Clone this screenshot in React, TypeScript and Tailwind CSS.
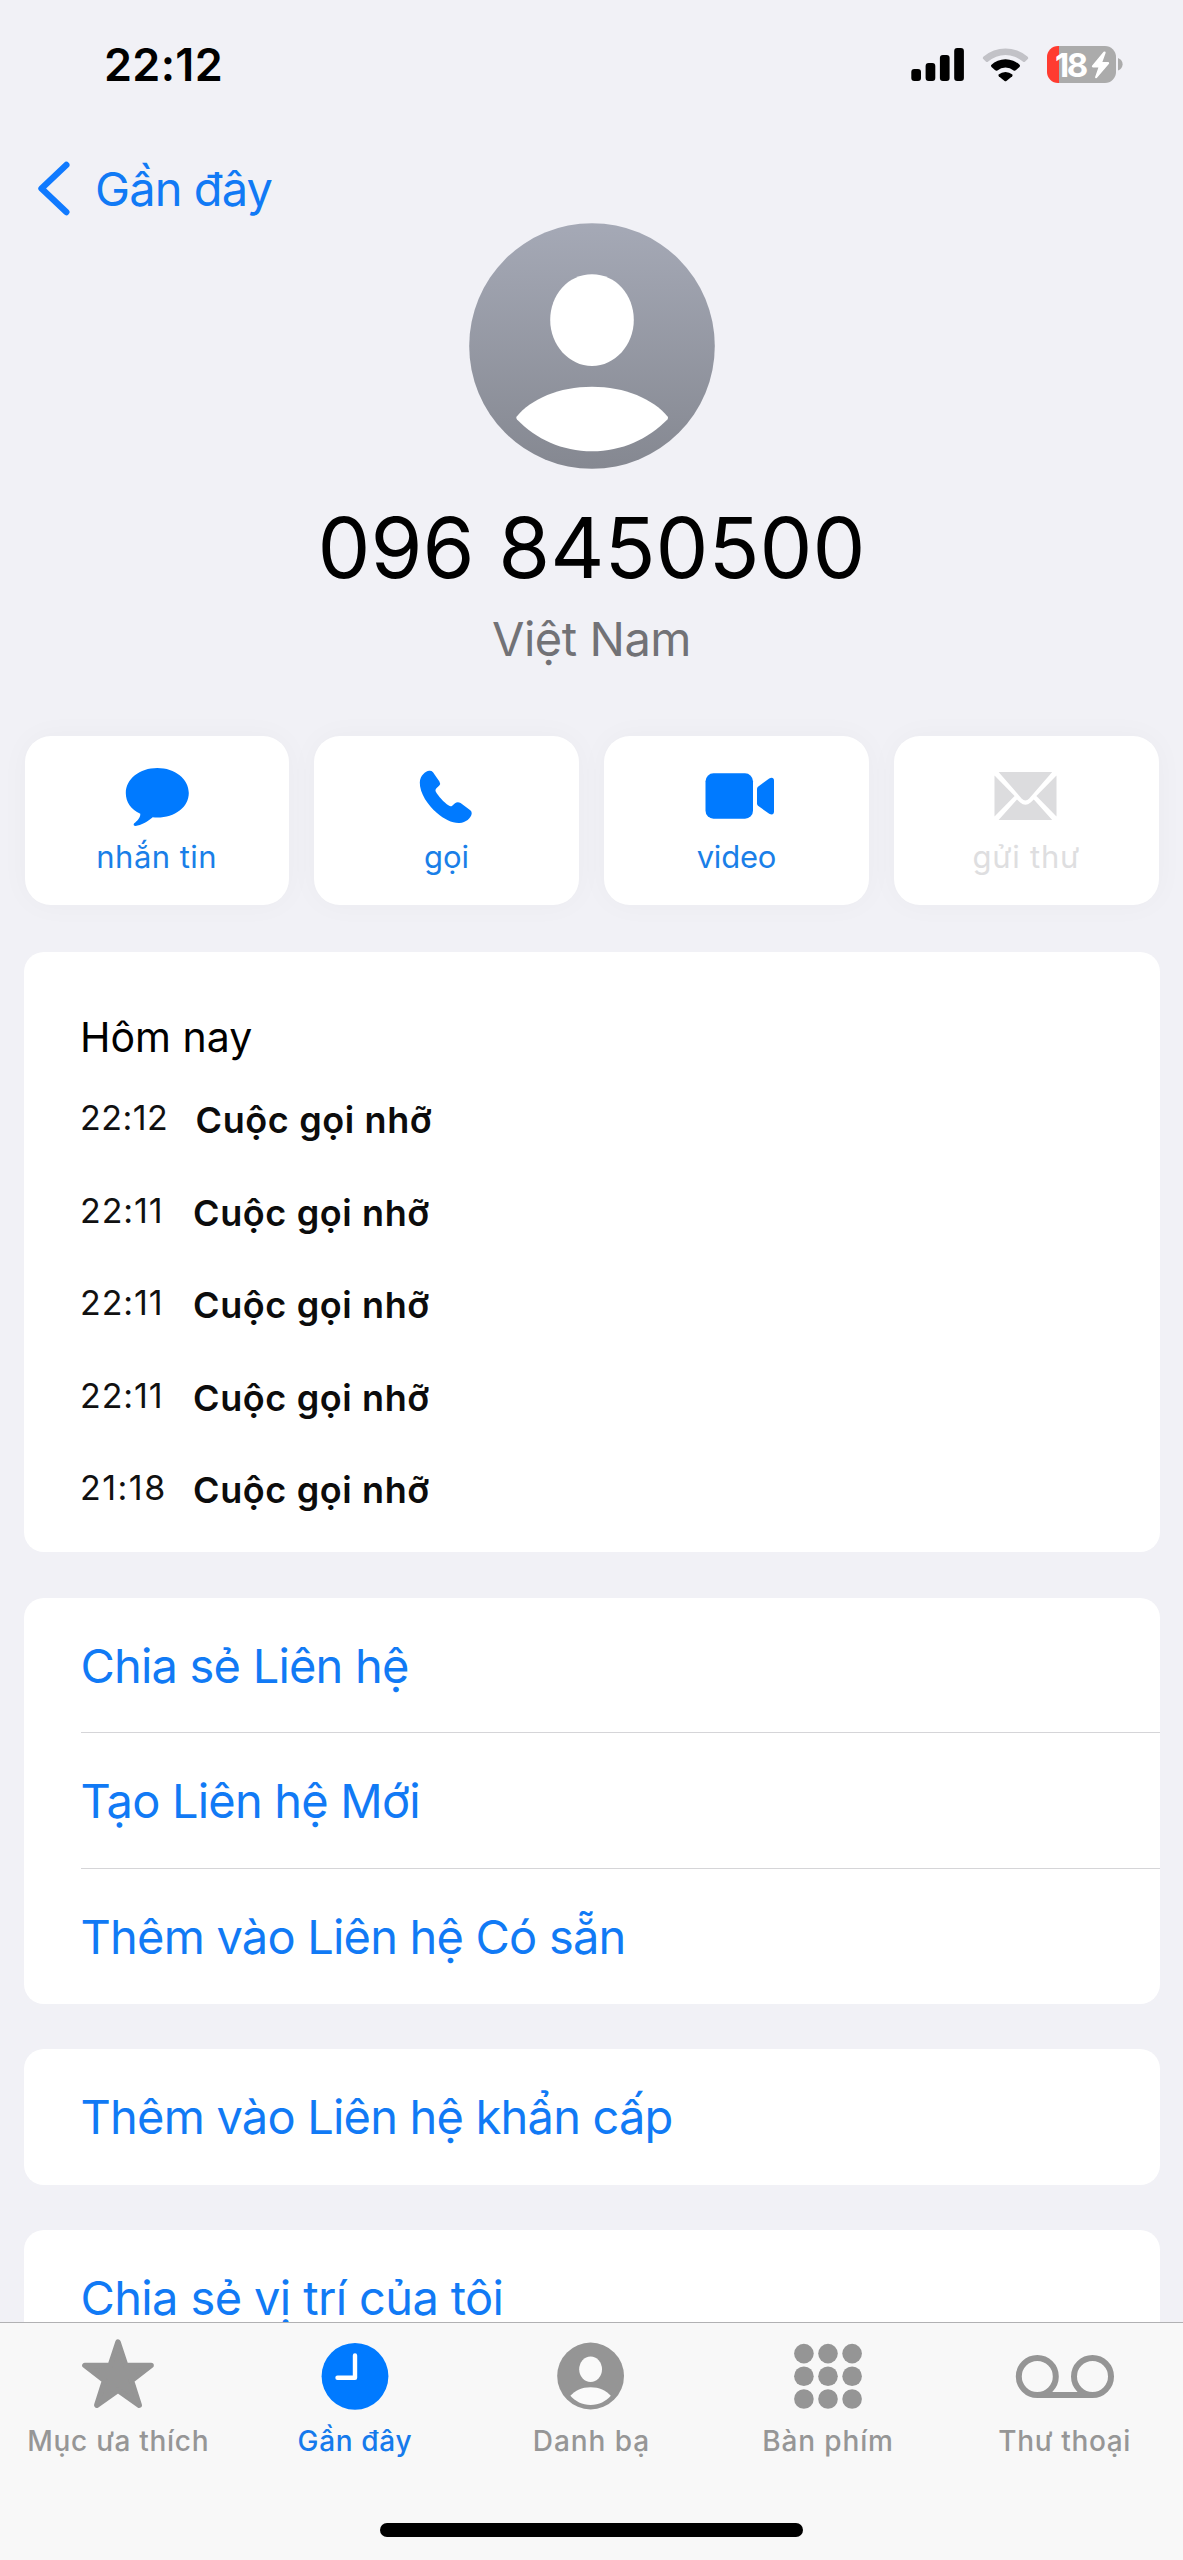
import type { ReactNode } from 'react';

function StatusBar() {
  return (
    <div className="flex h-[160px] shrink-0 items-start justify-between pr-[60px] pl-[104px]">
      <div className="mt-[37px] text-[45px] leading-[55px] font-semibold tracking-[0.3px]">22:12</div>
      <div className="mt-[46px] flex items-start">
        <svg width="54" height="36" viewBox="0 0 54 36">
          <rect x="0.3" y="23" width="9.7" height="12" rx="3" />
          <rect x="14.6" y="17" width="9.7" height="18" rx="3" />
          <rect x="28.9" y="9" width="9.7" height="26" rx="3" />
          <rect x="43.2" y="2" width="9.7" height="33" rx="3" />
        </svg>
        <svg className="ml-[17px]" width="48" height="36" viewBox="0 0 48 36">
          <path d="M1 12.8 Q0.4 11.6 1.6 10.6 A33.5 33.5 0 0 1 45.4 10.6 Q46.6 11.6 46 12.8 L43.2 15.6 Q42 16.6 40.8 15.6 A26 26 0 0 0 6.2 15.6 Q5 16.6 3.8 15.6 Z" fill="#c2c2c7" />
          <path d="M9.2 19 A20.5 20.5 0 0 1 37.8 19 Q38.3 20 37.5 21 L33.8 24.3 Q32.6 25.2 31.6 24.4 A12.6 12.6 0 0 0 15.4 24.4 Q14.4 25.2 13.2 24.3 L9.5 21 Q8.7 20 9.2 19 Z" />
          <path d="M16.6 28.6 A10.5 10.5 0 0 1 30.4 28.6 Q30.9 29.4 30.2 30.2 L24.4 35 Q23.5 35.6 22.6 35 L16.8 30.2 Q16.1 29.4 16.6 28.6 Z" />
        </svg>
        <div className="ml-[17px] flex items-center">
          <div className="flex h-[37px] w-[68.5px] items-center overflow-hidden rounded-[11px] bg-[linear-gradient(90deg,#ff3b30_12px,#ababab_12px)] pl-[8px] text-white">
            <span className="w-[36px] text-[33px] leading-[36px] font-bold tracking-[-2.4px]">18</span>
            <svg className="shrink-0" width="19" height="28" viewBox="0 0 19 28">
              <path d="M12.6 0.8 L1.2 14.4 Q0.2 16.2 2 16.4 L7.4 16.4 L4.1 26 Q4 28 5.8 27 L17.8 13 Q18.8 11.2 17 11 L11.4 11 L14.7 1.8 Q14.6 -0.4 12.6 0.8 Z" fill="#fff" />
            </svg>
          </div>
          <svg className="ml-[2.5px]" width="5" height="13" viewBox="0 0 5 13">
            <path d="M0 0 Q4.6 2 4.6 6.3 Q4.6 10.6 0 12.6 Z" fill="#ababab" />
          </svg>
        </div>
      </div>
    </div>
  );
}

function NavBar() {
  return (
    <div className="flex h-[57px] shrink-0 items-start pl-[37px] text-[#117af5]">
      <svg className="mt-[1px]" width="34" height="56" viewBox="0 0 34 56">
        <path d="M29.3 4 L4.5 27.5 L29.3 51" fill="none" stroke="#107aff" strokeWidth="6.4" strokeLinecap="round" strokeLinejoin="round" />
      </svg>
      <div className="ml-[24px] text-[47px] leading-[57px] tracking-[-0.9px]">Gần đây</div>
    </div>
  );
}

function Profile() {
  return (
    <div className="mt-[6px] flex shrink-0 flex-col items-center">
      <svg width="246" height="246" viewBox="0 0 246 246">
        <defs>
          <linearGradient id="avatar" x1="0" y1="0" x2="0" y2="1">
            <stop offset="0" stopColor="#a5a9b6" />
            <stop offset="1" stopColor="#858891" />
          </linearGradient>
        </defs>
        <circle cx="123" cy="123" r="122.8" fill="url(#avatar)" />
        <path d="M123 51.3 C147 51.3 164.8 72 164.8 97 C164.8 122 146 143 123 143 C100 143 81.2 122 81.2 97 C81.2 72 99 51.3 123 51.3 Z" fill="#fff" />
        <path d="M47.5 193.8 Q46.8 195 48 196.5 C67 216 93 228.3 123 228.3 C153 228.3 179 216 198.4 196.5 Q199.6 195 198.8 193.8 C184 176 156 163.8 123 163.8 C90 163.8 62 176 47.5 193.8 Z" fill="#fff" />
      </svg>
      <div className="mt-[28px] text-[84px] leading-[101px]">096 8450500</div>
      <div className="mt-[12px] text-[47px] leading-[57px] tracking-[-0.45px] text-[#727276]">Việt Nam</div>
    </div>
  );
}

const actions: { label: string; tracking: string; disabled?: boolean; icon: ReactNode }[] = [
  {
    label: 'nhắn tin',
    tracking: 'tracking-[0.45px]',
    icon: (
      <path d="M40.3 4 C58 4 71.8 15 71.8 29 C71.8 43 58 53.5 40.3 53.5 Q38 53.5 35.7 53.3 C31 57.5 24 61.5 18.6 62 Q15.8 62 17 59.6 C20.5 56.5 23.5 53.5 23.3 49.7 C14 45.5 8.8 38 8.8 29 C8.8 15 22.6 4 40.3 4 Z" />
    ),
  },
  {
    label: 'gọi',
    tracking: 'tracking-normal',
    icon: (
      <path d="M22.2 6.8 C18.5 7.3 13 11.5 12.8 18.5 C12.6 29 21 41.5 30 49 C37.5 55.3 45 59.3 52.5 59 C59 58.7 63.8 54.2 64.7 49.8 Q65 47.6 63.3 46.2 L53.6 39 Q50.6 37.2 48 39.2 L45.2 41.7 Q43.6 42.9 41.8 41.6 C36.6 38.2 31.6 32.6 28.7 27.6 Q27.9 25.9 29.2 24.6 L32.3 21.6 Q33.8 19.8 32.4 17.6 L26 8.2 Q24.4 6.5 22.2 6.8 Z" />
    ),
  },
  {
    label: 'video',
    tracking: 'tracking-[-0.2px]',
    icon: (
      <>
        <rect x="9.5" y="9.3" width="47.5" height="45.4" rx="8" />
        <path d="M61 25 Q61 23.6 62 22.8 L73.2 14.4 Q77.8 12.6 78 16.6 L78 47.6 Q77.8 51.8 73.2 49.8 L62 41.8 Q61 41 61 39.6 Z" />
      </>
    ),
  },
  {
    label: 'gửi thư',
    tracking: 'tracking-[0.75px]',
    disabled: true,
    icon: (
      <>
        <path d="M12.6 8 L66.2 8 L43.2 34.4 Q39.4 38.6 35.6 34.4 Z" />
        <path d="M8.5 11.5 L28.6 32 L8.5 52.5 Z" />
        <path d="M70.5 11.5 L50.4 32 L70.5 52.5 Z" />
        <path d="M12.6 56 L31 35.5 L34.2 38.5 Q39.4 43 44.6 38.5 L47.8 35.5 L66.2 56 Z" />
      </>
    ),
  },
];

function Actions() {
  return (
    <div className="mt-[69px] grid shrink-0 grid-cols-4 gap-[25.5px] px-[24.5px]">
      {actions.map((a) => (
        <div
          key={a.label}
          className={`flex h-[169px] flex-col items-center rounded-[26px] bg-white pt-[28px] shadow-[0_0_30px_rgba(0,0,0,0.03)] ${a.disabled ? 'text-[#dedee0]' : 'text-[#1a7fe8]'}`}
        >
          <svg width="80" height="64" viewBox="0 0 80 64" fill={a.disabled ? '#dcdcde' : '#007aff'}>
            {a.icon}
          </svg>
          <div className={`mt-[10px] text-[31px] leading-[38px] ${a.tracking}`}>{a.label}</div>
        </div>
      ))}
    </div>
  );
}

const calls = [
  { time: '22:12', width: 'w-[115.5px]', tracking: 'tracking-[0.5px]' },
  { time: '22:11', width: 'w-[113px]', tracking: 'tracking-[0.9px]' },
  { time: '22:11', width: 'w-[113px]', tracking: 'tracking-[0.9px]' },
  { time: '22:11', width: 'w-[113px]', tracking: 'tracking-[0.9px]' },
  { time: '21:18', width: 'w-[113px]', tracking: 'tracking-[1.5px]' },
];

function History() {
  return (
    <div className="mx-[23.5px] mt-[47px] h-[600px] shrink-0 rounded-[20px] bg-white pt-[60px] pl-[56.5px]">
      <div className="text-[41px] leading-[50px]">Hôm nay</div>
      <div className="mt-[35px]">
        {calls.map((c, i) => (
          <div key={i} className="flex h-[92.6px] items-start">
            <div className={`text-[34px] leading-[41px] text-[#111] ${c.width} ${c.tracking}`}>{c.time}</div>
            <div className="pt-[1px] text-[36px] leading-[44px] font-semibold tracking-[0.62px] text-[#0c0c0c]">Cuộc gọi nhỡ</div>
          </div>
        ))}
      </div>
    </div>
  );
}

function LinkCard({ items, className }: { items: string[]; className: string }) {
  return (
    <div className={`mx-[23.5px] shrink-0 rounded-[20px] bg-white pl-[57px] ${className}`}>
      {items.map((t, i) => (
        <div
          key={t}
          className={`flex h-[135.4px] items-center text-[47px] leading-[57px] text-[#117af5] ${i < items.length - 1 ? 'border-b border-[#d5d5d8]' : ''}`}
        >
          {t}
        </div>
      ))}
    </div>
  );
}

const keypadDots = [0, 1, 2].flatMap((r) => [0, 1, 2].map((c) => ({ cx: 30.9 + c * 24.1, cy: 17.6 + r * 22.7 })));

const tabs: { label: string; tracking: string; active?: boolean; icon: ReactNode }[] = [
  {
    label: 'Mục ưa thích',
    tracking: 'tracking-[0.7px]',
    icon: (
      <path
        d="M55 6 L62.6 29.2 L88.1 29.4 L68.4 44.6 L76.2 69.2 L55 54.2 L33.8 69.2 L41.6 44.6 L21.9 29.4 L47.4 29.2 Z"
        stroke="#959595"
        strokeWidth="5.5"
        strokeLinejoin="round"
      />
    ),
  },
  {
    label: 'Gần đây',
    tracking: 'tracking-[0.65px]',
    active: true,
    icon: (
      <>
        <circle cx="55" cy="40.3" r="33.4" />
        <path d="M55 19.5 V41.8 H37.5" fill="none" stroke="#fff" strokeWidth="4.4" strokeLinecap="round" strokeLinejoin="round" />
      </>
    ),
  },
  {
    label: 'Danh bạ',
    tracking: 'tracking-[0.95px]',
    icon: (
      <>
        <circle cx="54.6" cy="40" r="33.4" />
        <ellipse cx="54.6" cy="33.3" rx="11.4" ry="12.8" fill="#fafafa" />
        <path d="M34.4 59.8 C39 54.6 46 51.3 54.6 51.3 C63.2 51.3 70.2 54.6 74.8 59.8 C70 65.4 63 69 54.6 69 C46.2 69 39.2 65.4 34.4 59.8 Z" fill="#fafafa" />
      </>
    ),
  },
  {
    label: 'Bàn phím',
    tracking: 'tracking-[0.85px]',
    icon: keypadDots.map((d) => <circle key={`${d.cx}-${d.cy}`} cx={d.cx} cy={d.cy} r="9.8" />),
  },
  {
    label: 'Thư thoại',
    tracking: 'tracking-[0.65px]',
    icon: (
      <g fill="none" stroke="#959595" strokeWidth="6">
        <circle cx="27.3" cy="40.5" r="18.5" />
        <circle cx="82.5" cy="40.5" r="18.5" />
        <path d="M27.3 59 H82.5" />
      </g>
    ),
  },
];

function TabBar() {
  return (
    <div className="h-[238px] border-t border-[#b1b1b3] bg-[#f8f8f8] pt-[13px]">
      <div className="grid grid-cols-5">
        {tabs.map((t) => (
          <div key={t.label} className={`flex flex-col items-center ${t.active ? 'text-[#157aec]' : 'text-[#969696]'}`}>
            <svg width="110" height="80" viewBox="0 0 110 80" fill={t.active ? '#007aff' : '#959595'}>
              {t.icon}
            </svg>
            <div className={`mt-[8px] text-[28px] leading-[34px] font-medium whitespace-nowrap ${t.tracking}`}>{t.label}</div>
          </div>
        ))}
      </div>
      <div className="mx-auto mt-[65px] h-[14px] w-[423px] rounded-full bg-black" />
    </div>
  );
}

export default function App() {
  return (
    <div className="h-[2560px] w-[1183px] overflow-hidden bg-[#f1f1f6] font-['Inter',sans-serif] text-black">
      <div className="flex h-[2322px] flex-col overflow-hidden">
        <StatusBar />
        <NavBar />
        <Profile />
        <Actions />
        <History />
        <LinkCard className="mt-[46px] tracking-[-0.8px]" items={['Chia sẻ Liên hệ', 'Tạo Liên hệ Mới', 'Thêm vào Liên hệ Có sẵn']} />
        <LinkCard className="mt-[45px] tracking-[-0.8px]" items={['Thêm vào Liên hệ khẩn cấp']} />
        <LinkCard className="mt-[45.5px] tracking-[-0.63px]" items={['Chia sẻ vị trí của tôi']} />
      </div>
      <TabBar />
    </div>
  );
}
